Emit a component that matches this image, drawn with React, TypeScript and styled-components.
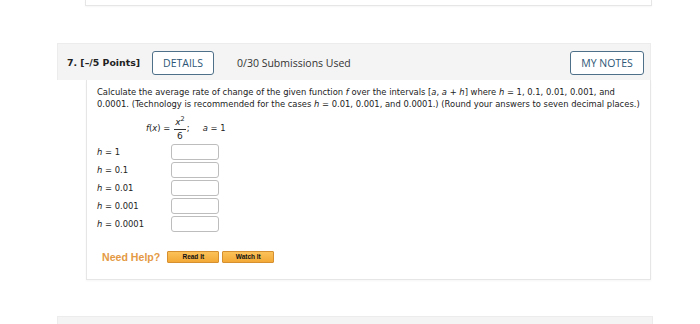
import styled, { createGlobalStyle } from "styled-components";

const GlobalStyle = createGlobalStyle`
body {
    margin: 0;
    background: #fff;
    font-family: "DejaVu Sans", Verdana, sans-serif;
    color: #222;
}
`

const Page = styled.div`
width: 700px;
height: 324px;
overflow: hidden;
display: flex;
flex-direction: column;
`

const PrevCard = styled.div`
margin-left: 85px;
width: 565px;
height: 6px;
border: 1px solid #e6e6e6;
border-top: none;
box-shadow: 0 1px 2px rgba(0,0,0,0.04);
`

const Question = styled.div`
margin: 37px 0 0 57px;
width: 594px;
`

const Header = styled.div`
box-sizing: border-box;
height: 37px;
background: #f4f4f4;
border: 1px solid #ececec;
border-bottom: none;
display: flex;
align-items: center;
padding: 0 6px 0 9px;
`

const Title = styled.span`
font-family: "DejaVu Sans", Verdana, sans-serif;
font-weight: 700;
font-size: 9.4px;
color: #222;
margin-right: 12px;
margin-top: 2px;
`

const OutlineButton = styled.button<{ $width: number }>`
box-sizing: border-box;
width: ${p => p.$width}px;
height: 24px;
background: #fff;
border: 1.5px solid #4e7089;
border-radius: 3px;
color: #2c5676;
font-family: "Open Sans", sans-serif;
font-size: 10.5px;
padding: 0;
margin-top: 2px;
`

const Submissions = styled.span`
font-family: "Open Sans", sans-serif;
font-size: 10.5px;
color: #333;
margin-left: 23px;
margin-top: 2px;
flex: 1;
`

const Body = styled.div`
box-sizing: border-box;
margin-left: 29px;
height: 200px;
border: 1px solid #e6e6e6;
border-top: none;
padding: 6px 10px 0 10px;
box-shadow: 0 1px 2px rgba(0,0,0,0.04);
`

const Prompt = styled.p`
margin: 0;
font-size: 8.4px;
line-height: 12px;
color: #222;
`

const Formula = styled.div`
display: flex;
align-items: center;
margin: 4px 0 0 49px;
font-size: 8.4px;
height: 28px;
`

const Fraction = styled.span`
display: inline-flex;
flex-direction: column;
align-items: center;
margin: 0 1px 0 4px;
line-height: 12px;
font-size: 9px;
& > span:first-child {
    border-bottom: 1px solid #333;
    padding: 0 1px 1px;
}
`

const Sup = styled.span`
font-size: 6.5px;
vertical-align: 4px;
`

const Rows = styled.div`
display: grid;
grid-template-columns: 74px 48px;
row-gap: 2px;
margin-top: 2px;
`

const Label = styled.span`
font-size: 8.4px;
display: flex;
align-items: center;
`

const AnswerBox = styled.div`
box-sizing: border-box;
width: 48px;
height: 16px;
border: 1px solid #bdbdbd;
border-radius: 3px;
background: #fff;
`

const Help = styled.div`
display: flex;
align-items: center;
margin: 19px 0 0 5px;
`

const HelpText = styled.span`
font-family: "Liberation Sans", Arial, sans-serif;
font-weight: 700;
font-size: 10.6px;
color: #e49a45;
margin-right: 7px;
`

const HelpButton = styled.button<{ $width: number }>`
box-sizing: border-box;
width: ${p => p.$width}px;
height: 12px;
padding: 0;
margin-right: 3px;
border: 1px solid #d7902f;
border-radius: 1px;
background: linear-gradient(#fbc25a, #f3a936);
font-family: "Liberation Sans", Arial, sans-serif;
font-weight: 700;
font-size: 6.5px;
color: #111;
line-height: 10px;
`

const NextHeader = styled.div`
margin: 36px 0 0 57px;
width: 594px;
height: 10px;
background: #f4f4f4;
border: 1px solid #ececec;
border-bottom: none;
`

const rows = ["1", "0.1", "0.01", "0.001", "0.0001"];

const App = () => {
    return (
        <Page>
            <GlobalStyle />
            <PrevCard />
            <Question>
                <Header>
                    <Title>7. [–/5 Points]</Title>
                    <OutlineButton $width={62}>DETAILS</OutlineButton>
                    <Submissions>0/30 Submissions Used</Submissions>
                    <OutlineButton $width={74}>MY NOTES</OutlineButton>
                </Header>
                <Body>
                    <Prompt>
                        Calculate the average rate of change of the given function <i>f</i> over the intervals [<i>a</i>, <i>a</i> + <i>h</i>] where <i>h</i> = 1, 0.1, 0.01, 0.001, and
                        <br />
                        0.0001. (Technology is recommended for the cases <i>h</i> = 0.01, 0.001, and 0.0001.) (Round your answers to seven decimal places.)
                    </Prompt>
                    <Formula>
                        <span><i>f</i>(<i>x</i>) =</span>
                        <Fraction>
                            <span><i>x</i><Sup>2</Sup></span>
                            <span>6</span>
                        </Fraction>
                        <span>;&nbsp;&nbsp;&nbsp;&nbsp;&nbsp;<i>a</i> = 1</span>
                    </Formula>
                    <Rows>
                        {rows.map(h => (
                            <>
                                <Label key={"l" + h}><i>h</i>&nbsp;= {h}</Label>
                                <AnswerBox key={"b" + h} />
                            </>
                        ))}
                    </Rows>
                    <Help>
                        <HelpText>Need Help?</HelpText>
                        <HelpButton $width={52}>Read It</HelpButton>
                        <HelpButton $width={52}>Watch It</HelpButton>
                    </Help>
                </Body>
            </Question>
            <NextHeader />
        </Page>
    )
}

export default App;
